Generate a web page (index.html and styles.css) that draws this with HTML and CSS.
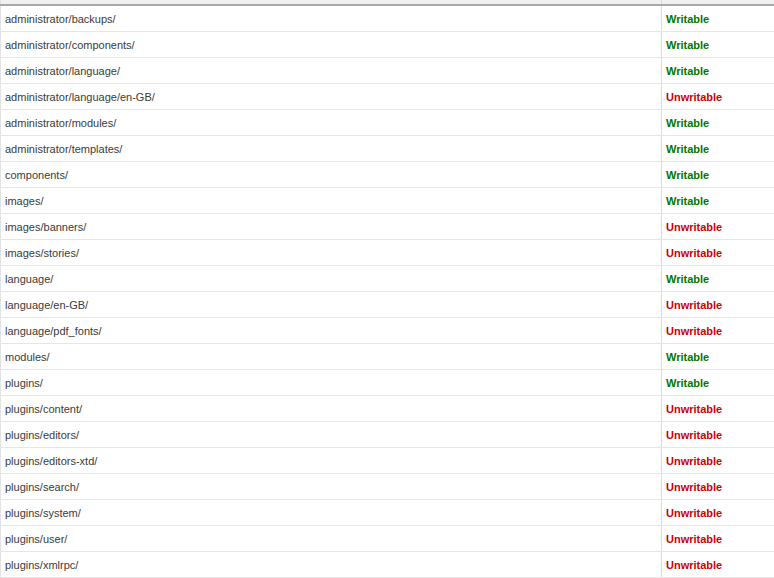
FILE: index.html
```html
<!DOCTYPE html>
<html lang="en">
<head>
    <meta charset="UTF-8">
    <title>Directory Permissions</title>
    <link rel="stylesheet" href="styles.css">
</head>
<body>
    <table class="perm-table">
        <thead>
            <tr>
                <th class="col-dir"></th>
                <th class="col-status"></th>
            </tr>
        </thead>
        <tbody id="permRows"></tbody>
    </table>
    <script>
        const dirs = [
            ['administrator/backups/', true],
            ['administrator/components/', true],
            ['administrator/language/', true],
            ['administrator/language/en-GB/', false],
            ['administrator/modules/', true],
            ['administrator/templates/', true],
            ['components/', true],
            ['images/', true],
            ['images/banners/', false],
            ['images/stories/', false],
            ['language/', true],
            ['language/en-GB/', false],
            ['language/pdf_fonts/', false],
            ['modules/', true],
            ['plugins/', true],
            ['plugins/content/', false],
            ['plugins/editors/', false],
            ['plugins/editors-xtd/', false],
            ['plugins/search/', false],
            ['plugins/system/', false],
            ['plugins/user/', false],
            ['plugins/xmlrpc/', false]
        ];
        const tbody = document.getElementById('permRows');
        dirs.forEach(d => {
            const tr = document.createElement('tr');
            const status = d[1]
                ? '<span class="writable">Writable</span>'
                : '<span class="unwritable">Unwritable</span>';
            tr.innerHTML = '<td class="dir">' + d[0] + '</td><td class="status">' + status + '</td>';
            tbody.appendChild(tr);
        });
    </script>
</body>
</html>
```

FILE: styles.css
```css
body {
    margin: 0;
    background: #fff;
    font-family: 'Liberation Sans', Arial, sans-serif;
    font-size: 11px;
    overflow: hidden;
}
.perm-table {
    border-collapse: collapse;
    width: 100%;
    table-layout: fixed;
    border-left: 1px solid #e2e2e2;
}
.perm-table th {
    height: 4px;
    padding: 0;
    background: #f0f0f0;
    border-bottom: 2px solid #a8a8a8;
}
.col-dir {
    width: 660px;
    border-right: 1px solid #dcdcdc;
}
.perm-table td {
    height: 25px;
    padding: 0 0 0 4px;
    border-bottom: 1px solid #e6e6e6;
    vertical-align: middle;
    color: #3a3a3a;
}
.perm-table td.dir {
    border-right: 1px solid #dcdcdc;
}
.writable {
    color: #007700;
    font-weight: bold;
}
.unwritable {
    color: #cc0000;
    font-weight: bold;
}
```
